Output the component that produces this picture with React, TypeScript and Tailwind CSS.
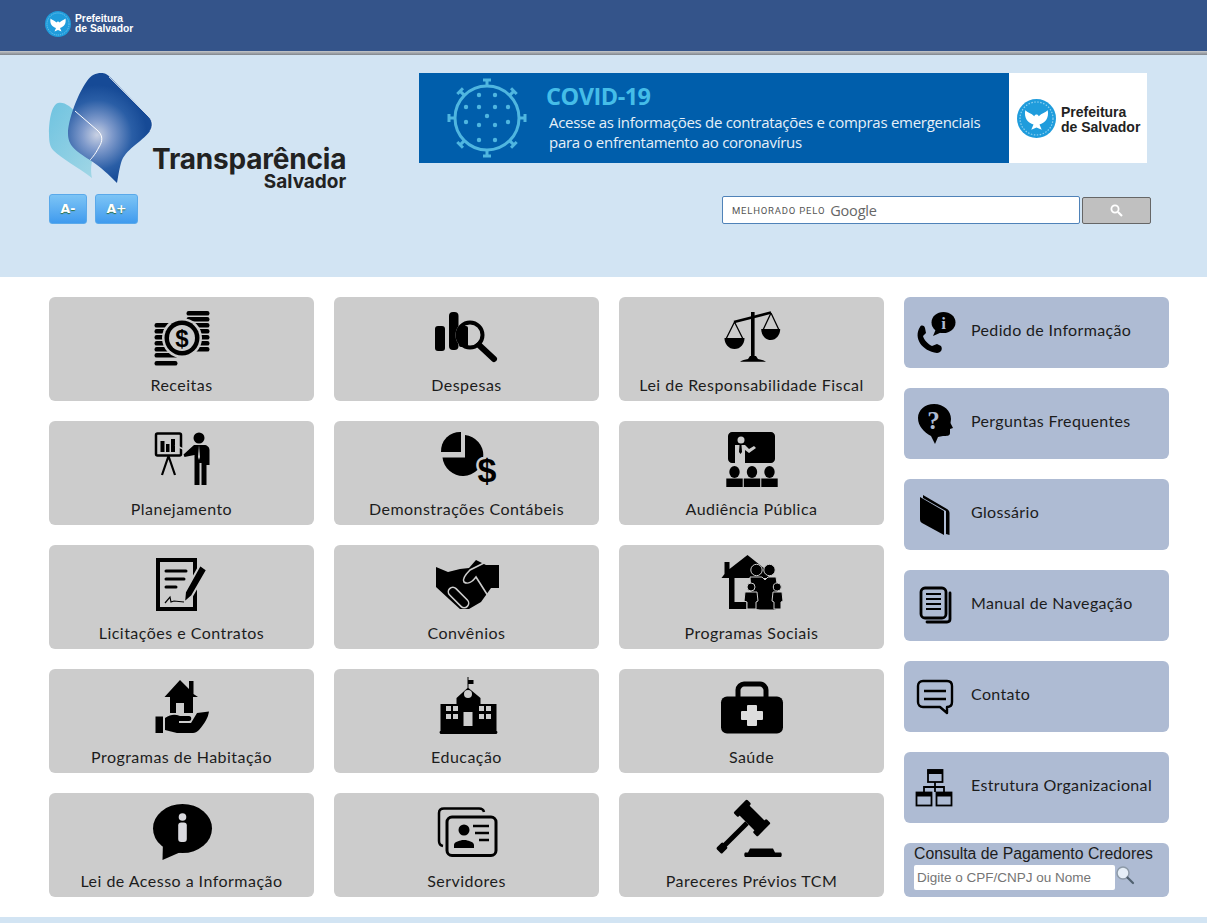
import React from 'react';

// icon coordinates are screen pixels relative to the top left of each svg
const G = '#cccccc';
const B = '#aebbd3';

const Svg = ({ children }: { children: React.ReactNode }) => (
  <svg width="70" height="60" viewBox="0 0 70 60" className="overflow-visible shrink-0">
    {children}
  </svg>
);
const SideSvg = ({ children }: { children: React.ReactNode }) => (
  <svg width="50" height="50" viewBox="0 0 50 50" className="overflow-visible shrink-0">
    {children}
  </svg>
);

const Receitas = () => (
  <Svg>
    {[3, 9, 15, 21, 27, 33, 39].map((y) => <rect key={y} x="39.500" y={y} width="23" height="4.600" rx="2.200" />)}
    {[15, 21, 27, 33, 39, 45, 53].map((y) => <rect key={y} x="7.500" y={y} width="23" height="4.600" rx="2.200" />)}
    <circle cx="35" cy="30" r="20" fill={G} />
    <circle cx="35" cy="30" r="17.500" />
    <circle cx="35" cy="30" r="13" fill={G} />
    <text x="35" y="38.500" textAnchor="middle" fontSize="24" fontWeight="700" fontFamily="Liberation Sans, sans-serif">$</text>
  </Svg>
);
const Despesas = () => (
  <Svg>
    <rect x="3" y="18" width="10" height="25" rx="3" />
    <rect x="17" y="4" width="9.500" height="38" rx="4" />
    <circle cx="38" cy="27" r="14.500" fill={G} />
    <rect x="27" y="18" width="9" height="21" rx="2" />
    <circle cx="38" cy="27" r="12.500" fill="none" stroke="#000" strokeWidth="4" />
    <path d="M47 37 L62 51" stroke="#000" strokeWidth="6" strokeLinecap="round" />
  </Svg>
);
const Lrf = () => (
  <Svg>
    <rect x="34" y="4" width="3.600" height="44" />
    <path d="M33 48 h6 l2 3 c3 1 6 1 8 2.800 h-26 c2-1.800 5-1.800 8-2.800z" />
    <path d="M17 14 L54 4.500" stroke="#000" strokeWidth="2.600" />
    <path d="M17.500 14 L9 31 M17.500 14 L26 31 M54 5 L46 22 M54 5 L62 22" stroke="#000" strokeWidth="1.300" fill="none" />
    <path d="M7.500 30 h20 c0 6 -4 11 -10 11 s-10 -5 -10 -11z" />
    <path d="M44.200 21 h19 c0 6 -4 11 -9.500 11 s-9.500 -5 -9.500 -11z" />
  </Svg>
);
const Planejamento = () => (
  <Svg>
    <rect x="9" y="1.500" width="25" height="22" rx="1.500" fill="none" stroke="#000" strokeWidth="2.500" />
    <rect x="13.500" y="9" width="4" height="11" /><rect x="19" y="12" width="3.500" height="8" /><rect x="24" y="7" width="4" height="13" />
    <path d="M21.500 24 L15 43 M21.500 24 L28 43" stroke="#000" strokeWidth="2.200" />
    <circle cx="52" cy="6" r="5.500" />
    <path d="M28 13 L42 20" stroke={G} strokeWidth="1.500" />
    <path d="M47 13 h10 c3 0 5.500 2 5.500 5 v15 h-3 v20 h-5 v-22 h-2 v22 h-5 v-30 l-10 2 l-1 -2.500 z" />
    <path d="M52 13 l1 12 l-1 3 l-1 -3 z" fill={G} />
  </Svg>
);
const Demonstracoes = () => (
  <Svg>
    <path d="M33 3 a20.500 20.500 0 1 1 -22.500 22.500 h22.500 z" />
    <path d="M9 20 a19 19 0 0 1 20 -20 v20 z" />
    <text x="55" y="50" textAnchor="middle" fontSize="34" fontWeight="700" fontFamily="Liberation Sans, sans-serif" stroke={G} strokeWidth="5" paintOrder="stroke">$</text>
  </Svg>
);
const Audiencia = () => (
  <Svg>
    <path d="M15 0 h39 c2 0 4 2 4 4 v23 c0 2 -2 4 -4 4 h-26 v-12 l-4 0 h-6 v12 h-3 c-2 0 -4 -2 -4 -4 v-23 c0 -2 2 -4 4 -4z" />
    <circle cx="24" cy="8" r="3.500" fill={G} />
    <path d="M18 13 h10 l4 4 l5 -3 l2 2 l-7 5 l-4 -3 v13 h-10z" fill={G} />
    <path d="M22.500 13 h2 l.5 7 l-1.500 2 l-1.500 -2z" />
    {[17.500, 35, 52.500].map((x) => (
      <g key={x}>
        <ellipse cx={x} cy="40" rx="5.200" ry="6" />
        <rect x={x - 8.200} y="46.500" width="16.400" height="8.500" />
      </g>
    ))}
  </Svg>
);
const Licitacoes = () => (
  <Svg>
    <path d="M11 4 h37 v49 h-37z" fill="none" stroke="#000" strokeWidth="4" />
    <path d="M19 15 h20 M19 23 h18 M19 31 h10" stroke="#000" strokeWidth="3" strokeLinecap="round" />
    <path d="M53 9 l7 5 l-15 26 l-8 7 l1 -11 z" stroke={G} strokeWidth="2" />
    <path d="M18 47 l5 -6 l1 5 l3 -1 l10 1" stroke="#000" strokeWidth="1.200" fill="none" />
  </Svg>
);
const Convenios = () => (
  <Svg>
    <path d="M4 11 l12 5 l12 -3 l9 -1 l7 -8 l10 5 h13 v23 h-8 l-10 14 l-12 7 h-9 l-11 -10 l-13 -12 z" />
    <path d="M52 7 L38 14 C33 19 30 23 32 26 C36 29 41 25 44 21 L58 43" fill="none" stroke={G} strokeWidth="1.600" />
    <rect x="14" y="37" width="25" height="9" rx="4.500" transform="rotate(45 26.500 41.500)" stroke={G} strokeWidth="1.600" />
  </Svg>
);
const Sociais = () => (
  <Svg>
    <path d="M4.500 22 l3 -4 v-12 h5 v7 l18 -14 l20 16 l1.500 7 h-34.500 v24 h12 v7 h-17.500 v-31z" />
    <circle cx="39.500" cy="14" r="5.700" stroke={G} strokeWidth="1" />
    <circle cx="52.500" cy="14" r="5.700" stroke={G} strokeWidth="1" />
    <path d="M33 21 h12 l3 3 l3 -3 h8 l2 12 l-2 21 h-16 l-8 -1z" stroke={G} strokeWidth="1" />
    <circle cx="34" cy="31" r="4" stroke={G} strokeWidth="1" />
    <circle cx="60.300" cy="31" r="4" stroke={G} strokeWidth="1" />
    <path d="M28 36 h12 l1 9 l-2 1 v7 h-9 v-7 l-3 -1z" stroke={G} strokeWidth="1" />
    <path d="M56 36 h9 l1 9 l-2 1 v7 h-7 v-7 l-2 -1z" stroke={G} strokeWidth="1" />
  </Svg>
);
const Habitacao = () => (
  <Svg>
    <path d="M17.500 17 L33 0 L42 9 V1 H46.500 V14 L51 17 H46 V33 H37 V23 H29 V33 H23 V17z" />
    <rect x="8.500" y="36.500" width="7.500" height="16.500" />
    <path d="M18 38 C24 34 28 34 33 36 H42 C45 36 45 41 42 41 H32 V43 H44 L50 33 L62 31.500 C61 38 58 43 52 50 C50 52 48 53 46 53 H30 L18 50z" />
  </Svg>
);
const Educacao = () => (
  <Svg>
    <path d="M35.500 -3 h1 v3 h5 v4 h-5 v4 l12 10 v6 h16 v27 c1 0 1.500 2 0 3 h-56 c-1.500 -1 -1 -3 0 -3 v-27 h16 v-6 l11 -10z" />
    <circle cx="36" cy="14" r="4" fill={G} />
    {[14, 21, 47, 54].map((x) => (
      <g key={x} fill={G}>
        <rect x={x} y="26" width="5" height="5" />
        <rect x={x} y="34" width="5" height="5" />
      </g>
    ))}
    <rect x="31.500" y="32" width="9" height="14" fill={G} />
  </Svg>
);
const Saude = () => (
  <Svg>
    <path d="M21 17 v-7 c0 -3 3 -6 6 -6 h16 c3 0 6 3 6 6 v7" fill="none" stroke="#000" strokeWidth="5" />
    <rect x="4" y="16.500" width="62" height="37" rx="6" />
    <path d="M31 25 h8 a1 1 0 0 1 1 1 v5 h5 a1 1 0 0 1 1 1 v7 a1 1 0 0 1 -1 1 h-5 v5 a1 1 0 0 1 -1 1 h-8 a1 1 0 0 1 -1 -1 v-5 h-5 a1 1 0 0 1 -1 -1 v-7 a1 1 0 0 1 1 -1 h5 v-5 a1 1 0 0 1 1 -1z" fill="#dddddd" />
  </Svg>
);
const AcessoInfo = () => (
  <Svg>
    <ellipse cx="35.500" cy="24.500" rx="29.500" ry="24.500" />
    <path d="M16 36 L15.500 56 L36 47z" />
    <circle cx="35.500" cy="13" r="3.800" fill="#d9d9de" />
    <rect x="31.200" y="18.500" width="8.600" height="19.500" rx="3" fill="#d9d9de" />
  </Svg>
);
const Servidores = () => (
  <Svg>
    <path d="M11 42 c-2.500 -.5 -4 -2 -4 -5 v-28 c0 -3 2 -4.500 5 -4.500 h35 c3 0 4.500 1 5 3.500" fill="none" stroke="#000" strokeWidth="2.500" />
    <rect x="15" y="13" width="49" height="38.500" rx="5" fill="none" stroke="#000" strokeWidth="3" />
    <circle cx="32" cy="26" r="5.500" />
    <path d="M22 44 v-3 c0 -3 5 -4 8 -5 h4 c3 1 8 2 8 5 v3z" />
    <path d="M41 22 h16 M43 29 h14 M47 36 h10" stroke="#000" strokeWidth="2.500" />
  </Svg>
);
const Pareceres = () => (
  <Svg>
    <g transform="translate(35 14) rotate(45)">
      <rect x="-12" y="-7" width="24" height="14" />
      <rect x="-17" y="-9.500" width="6.500" height="19" rx="1.500" />
      <rect x="10.500" y="-9.500" width="6.500" height="19" rx="1.500" />
      <rect x="-2.500" y="7" width="5" height="32" />
      <rect x="-4" y="38" width="8" height="9" rx="1.500" />
    </g>
    <path d="M33 44.500 h23 l2 4 h6 c1 1 1 3.500 0 4.500 h-36 c-1 -1 -1 -3.500 0 -4.500 h3 z" />
  </Svg>
);

const Pedido = () => (
  <SideSvg>
    <path d="M8 19 C1 30 10 43 25 45 C29 45 31 41 29 38 L25 36 L20 38 C16 36 12 32 11 28 L14 25 L13 20 C12 17 9 17 8 19z" />
    <ellipse cx="31.500" cy="14.500" rx="12" ry="10.500" />
    <path d="M24 21 L21 28 L30 24z" />
    <text x="31.500" y="21" textAnchor="middle" fontSize="17" fontWeight="700" fontFamily="Liberation Serif, serif" fill={B}>i</text>
  </SideSvg>
);
const Perguntas = () => (
  <SideSvg>
    <path d="M22 5 C32 5 39 12 39 20 L38.500 24 L41 29 L38 30 V34 C38 37 35 37 31 37 L26 38 L23 45 L19 37 C12 33 6 27 6 19 C6 11 13 5 22 5z" />
    <text x="21.500" y="30" textAnchor="middle" fontSize="25" fontWeight="700" fontFamily="Liberation Serif, serif" fill={B}>?</text>
  </SideSvg>
);
const Glossario = () => (
  <SideSvg>
    <path d="M11 5 L35 19 C36.500 20 37.500 21 37.500 23 V45 L34 44 V21 L11 8z" />
    <path d="M8 7 L32 21 V45 L10 33 C8.500 32 8 31 8 29z" />
  </SideSvg>
);
const Manual = () => (
  <SideSvg>
    <path d="M38 12 V38 C38 40 36.500 41 35 41 H15" fill="none" stroke="#000" strokeWidth="2.800" strokeLinecap="round" />
    <rect x="9" y="7" width="25" height="30" rx="4" fill="none" stroke="#000" strokeWidth="2.800" />
    <path d="M14 13 h15 M14 18 h15 M14 23 h15 M14 28 h15" stroke="#000" strokeWidth="2.200" />
  </SideSvg>
);
const Contato = () => (
  <SideSvg>
    <path d="M11 9 h24 c3 0 5 2 5 5 v16 c0 3 -2 5 -5 5 v6 l-7 -6 h-17 c-3 0 -5 -2 -5 -5 v-16 c0 -3 2 -5 5 -5z" fill="none" stroke="#000" strokeWidth="2.400" strokeLinejoin="round" />
    <path d="M12 19 h22 M12 27 h22" stroke="#000" strokeWidth="2.400" />
  </SideSvg>
);
const Estrutura = () => (
  <SideSvg>
    <rect x="16" y="7" width="14.500" height="12" fill="none" stroke="#000" strokeWidth="1.800" />
    <rect x="15.500" y="6.500" width="15.500" height="4.500" />
    <path d="M23 19 V29 M12 29 V24 H32 V29" fill="none" stroke="#000" strokeWidth="1.800" />
    {[4.500, 24.500].map((x) => (
      <g key={x}>
        <rect x={x} y="29.500" width="15" height="13" fill="none" stroke="#000" strokeWidth="1.800" />
        <rect x={x - 0.500} y="29" width="16" height="4.500" />
      </g>
    ))}
  </SideSvg>
);

const cards = [
  { label: 'Receitas', icon: Receitas },
  { label: 'Despesas', icon: Despesas },
  { label: 'Lei de Responsabilidade Fiscal', icon: Lrf },
  { label: 'Planejamento', icon: Planejamento },
  { label: 'Demonstrações Contábeis', icon: Demonstracoes },
  { label: 'Audiência Pública', icon: Audiencia },
  { label: 'Licitações e Contratos', icon: Licitacoes },
  { label: 'Convênios', icon: Convenios },
  { label: 'Programas Sociais', icon: Sociais },
  { label: 'Programas de Habitação', icon: Habitacao },
  { label: 'Educação', icon: Educacao },
  { label: 'Saúde', icon: Saude },
  { label: 'Lei de Acesso a Informação', icon: AcessoInfo },
  { label: 'Servidores', icon: Servidores },
  { label: 'Pareceres Prévios TCM', icon: Pareceres },
];

const sideLinks = [
  { label: 'Pedido de Informação', icon: Pedido },
  { label: 'Perguntas Frequentes', icon: Perguntas },
  { label: 'Glossário', icon: Glossario },
  { label: 'Manual de Navegação', icon: Manual },
  { label: 'Contato', icon: Contato },
  { label: 'Estrutura Organizacional', icon: Estrutura },
];

const Dove = ({ size }: { size: number }) => (
  <svg width={size} height={size} viewBox="0 0 26 26" className="shrink-0">
    <circle cx="13" cy="13" r="13" fill="#1f9cdc" />
    <circle cx="13" cy="13" r="11" fill="none" stroke="#8fd0ef" strokeWidth=".8" strokeDasharray="1 1" />
    <path d="M5.500 7.500 C7 9 9.500 9.500 11.500 11.500 C12 10 14 10 14.500 11.500 C16.500 9.500 19 9 20.500 7.500 C21.500 13 18.500 16 15 17 L16.500 20.500 L13 19 L9.500 20.500 L11 17 C7.500 16 4.500 13 5.500 7.500z" fill="#ffffff" />
  </svg>
);

const Virus = () => (
  <svg width="80" height="80" viewBox="0 0 80 80" className="shrink-0" fill="none" stroke="#4fb6e0" strokeWidth="3">
    <circle cx="40" cy="40" r="32" />
    {[0, 45, 90, 135, 180, 225, 270, 315].map((a) => (
      <path key={a} d="M40 8 V2 M36 2 H44" transform={`rotate(${a} 40 40)`} />
    ))}
    <g fill="#4fb6e0" stroke="none">
      {[[32, 17], [48, 17], [19, 29], [32, 29], [48, 29], [61, 29], [40, 38], [19, 44], [32, 47], [48, 47], [61, 44], [32, 62], [48, 62]].map(([x, y]) => (
        <circle key={`${x}-${y}`} cx={x} cy={y} r="2.200" />
      ))}
    </g>
  </svg>
);

const LogoMark = () => (
  <svg width="103" height="110" viewBox="0 0 103 110" className="shrink-0 self-start overflow-visible">
    <defs>
      <radialGradient id="glow" gradientUnits="userSpaceOnUse" cx="48" cy="62" r="50">
        <stop offset="0" stopColor="#c9d1e3" />
        <stop offset=".3" stopColor="#7f9acb" />
        <stop offset=".7" stopColor="#2a5ea6" />
        <stop offset="1" stopColor="#164a96" />
      </radialGradient>
      <linearGradient id="light" x1="0" y1="0" x2="1" y2="1">
        <stop offset="0" stopColor="#6fc3e0" />
        <stop offset="1" stopColor="#a5d8e6" />
      </linearGradient>
    </defs>
    <path d="M9 30 C12 29 16 30 20 33 L48 57 C54 62 54 68 50 74 C46 82 40 88 43 105 C30 95 12 85 5 78 C1 74 0 70 0 60 C0 50 2 32 9 30Z" fill="url(#light)" />
    <path d="M52 0 C56 0 58 1 62 5 L100 44 C104 48 104 54 101 58 C92 70 76 76 72 90 C70 97 69 105 68 110 C60 102 52 94 41 87 C25 77 19 72 19 60 C19 48 28 22 38 8 C42 2 47 0 52 0Z" fill="url(#glow)" />
    <path d="M60 4 L100 44 C104 48 104 54 101 58" fill="none" stroke="#ffffff" strokeOpacity=".7" strokeWidth="1" />
    <path d="M26 38 L48 57 C54 62 54 68 50 74 C46 82 42 86 41 87" fill="none" stroke="#ffffff" strokeWidth="1" />
  </svg>
);

const FontButton = ({ label, width }: { label: string; width: string }) => (
  <button
    type="button"
    className={`h-[30px] ${width} rounded-[3px] border border-[#5aa9ea] bg-gradient-to-b from-[#7cc4f5] to-[#3f9bee] font-['DejaVu_Sans',sans-serif] text-[12.500px] font-bold text-white [text-shadow:0_1px_1px_#2f6f3f]`}
  >
    {label}
  </button>
);

export default function App() {
  return (
    <div className="min-h-[923px] bg-white font-['Lato',sans-serif] text-[#1c1c1c]">
      {/* Top bar */}
      <header className="flex h-[51px] items-start bg-[#34548a] pl-[45px] pt-[11px]">
        <Dove size={26} />
        <div className="ml-[4px] mt-[3px] font-['Liberation_Sans',sans-serif] text-[10.300px] font-bold leading-[10px] text-white">
          <div>Prefeitura</div>
          <div>de Salvador</div>
        </div>
      </header>
      <div className="h-[4px] bg-gradient-to-b from-[#c4c6ca] to-[#7f858c]" />

      {/* Logo, banner and search */}
      <section className="flex h-[222px] bg-[#d2e4f3] pl-[49px] pt-[18px]">
        <div className="w-[370px]">
          <div className="flex h-[119px] items-end">
            <LogoMark />
            <div className="flex flex-col items-end font-['Inter',sans-serif] font-bold text-[#222222]">
              <span className="text-[28px] leading-[26px] tracking-[-0.2px]">Transparência</span>
              <span className="text-[19px] leading-[20px]">Salvador</span>
            </div>
          </div>
          <div className="mt-[2px] flex gap-[8px]">
            <FontButton label="A-" width="w-[38px]" />
            <FontButton label="A+" width="w-[43px]" />
          </div>
        </div>

        <div>
          <div className="flex h-[90px] w-[728px]">
            <div className="flex w-[590px] items-center bg-[#005eab] pl-[28px]">
              <Virus />
              <div className="ml-[19px] pb-[1px] font-['Open_Sans',sans-serif]">
                <div className="text-[23.500px] font-bold leading-[26px] tracking-[-0.5px] text-[#45bde8]">COVID-19</div>
                <div className="mt-[3px] pl-[3px] text-[15px] leading-[21px] tracking-[-0.28px] text-[#e6f0f8]">
                  Acesse as informações de contratações e compras emergenciais
                </div>
                <div className="pl-[3px] text-[15px] leading-[19px] tracking-[-0.28px] text-[#e6f0f8]">
                  para o enfrentamento ao coronavírus
                </div>
              </div>
            </div>
            <div className="flex flex-1 items-center bg-white pl-[8px]">
              <Dove size={39} />
              <div className="ml-[5px] mt-[3px] font-['Liberation_Sans',sans-serif] text-[14px] font-bold leading-[15px] text-[#222222]">
                <div>Prefeitura</div>
                <div>de Salvador</div>
              </div>
            </div>
          </div>

          <div className="ml-[303px] mt-[33px] flex items-start gap-[2px]">
            <div className="flex h-[28px] w-[358px] items-center rounded-[2px] border border-[#4f82b8] bg-white pl-[9px] pt-[2px]">
              <span className="font-['Roboto',sans-serif] text-[9.500px] tracking-[0.8px] text-[#555555]">MELHORADO PELO</span>
              <span className="ml-[5px] font-['Open_Sans',sans-serif] text-[14.500px] tracking-[-0.2px] text-[#666666]">Google</span>
            </div>
            <button type="button" className="mt-[1px] flex h-[27px] w-[69px] items-center justify-center rounded-[2px] border border-[#666666] bg-[#c0c0c0]">
              <svg width="13" height="13" viewBox="0 0 13 13" fill="none" stroke="#ffffff" strokeWidth="1.800">
                <circle cx="5" cy="5" r="3.600" />
                <path d="M8 8 L12 12" strokeWidth="2.200" />
              </svg>
            </button>
          </div>
        </div>
      </section>

      {/* Main menu */}
      <main className="flex h-[640px] gap-[20px] pl-[49px] pt-[20px]">
        <div className="grid w-[835px] grid-cols-3 content-start gap-[20px]">
          {cards.map(({ label, icon: Icon }) => (
            <a key={label} className="flex h-[104px] flex-col items-center rounded-[6px] bg-[#cccccc] pt-[11px]">
              <Icon />
              <span className="mt-[7px] text-[16px] leading-[20px] tracking-[0.47px]">{label}</span>
            </a>
          ))}
        </div>

        <div className="flex w-[265px] flex-col gap-[20px]">
          {sideLinks.map(({ label, icon: Icon }) => (
            <a key={label} className="flex h-[71px] items-center rounded-[6px] bg-[#aebbd3] pl-[8px]">
              <Icon />
              <span className="mb-[5px] ml-[9px] text-[16px] tracking-[0.35px]">{label}</span>
            </a>
          ))}
          <div className="h-[54px] rounded-[6px] bg-[#aebbd3] pl-[10px] font-['Liberation_Sans',sans-serif]">
            <div className="text-[15.800px] leading-[22px] text-[#1c1c1c]">Consulta de Pagamento Credores</div>
            <div className="flex items-start">
              <input
                type="text"
                placeholder="Digite o CPF/CNPJ ou Nome"
                className="h-[25px] w-[201px] rounded-[2px] bg-white pl-[3px] text-[13.500px] outline-none placeholder:text-[#757575]"
              />
              <svg width="20" height="20" viewBox="0 0 20 20" className="shrink-0">
                <circle cx="8" cy="8" r="6" fill="#e6eef7" stroke="#8d9aa8" strokeWidth="1.500" />
                <path d="M12.500 12.500 L18 18" stroke="#50606f" strokeWidth="2.200" strokeLinecap="round" />
              </svg>
            </div>
          </div>
        </div>
      </main>

      <footer className="h-[6px] bg-[#d2e4f3]" />
    </div>
  );
}
